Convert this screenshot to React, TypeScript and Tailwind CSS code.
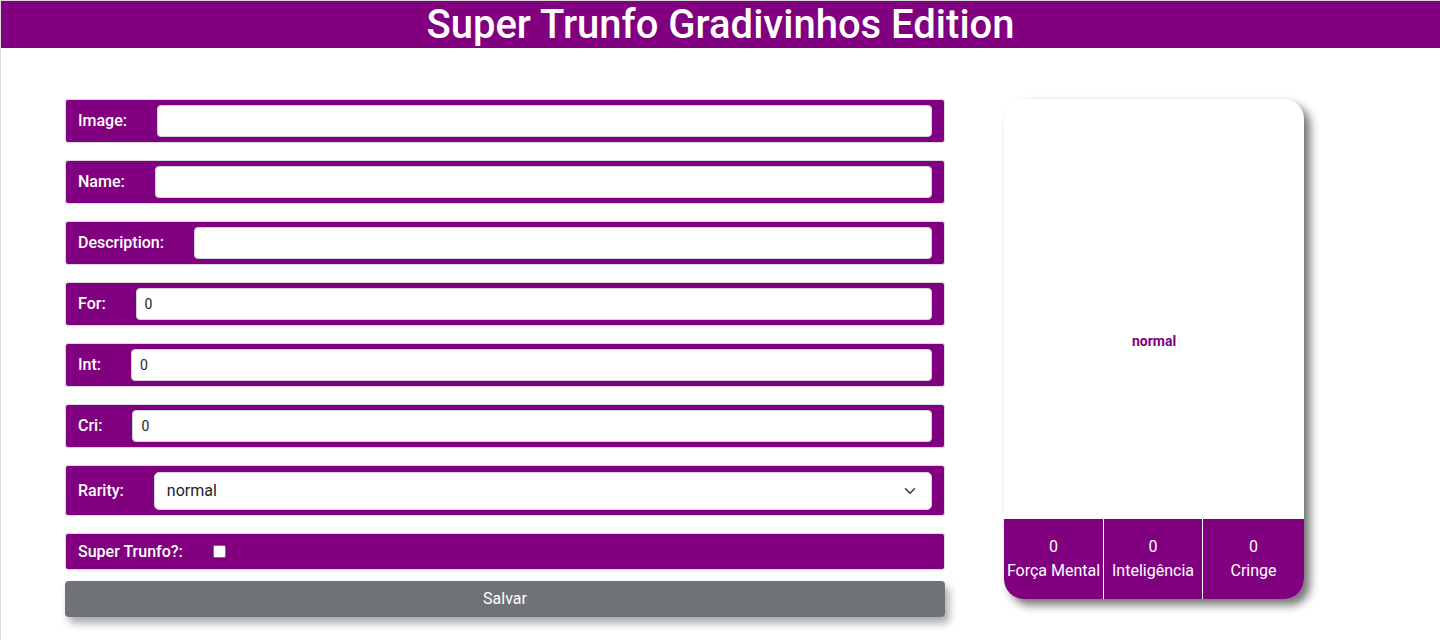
import React from "react";

function Row({ label, value, gap = "ml-[30px]" }: { label: string; value?: string; gap?: string }) {
  return (
    <div className="flex items-center h-[44px] bg-[#800080] border border-[#d8d8e0] rounded-[3px] pl-[12px] pr-[12px]">
      <span className="text-white text-[16px] font-medium whitespace-nowrap">{label}</span>
      <div className={`${gap} flex-1 h-[32px] bg-white rounded-[4px] border border-[#ced4da] flex items-center px-[8px] text-[14px] text-[#212529]`}>
        {value}
      </div>
    </div>
  );
}

export default function App() {
  return (
    <div className="w-[1440px] h-[640px] bg-white border-t border-l border-[#d9d9d9] overflow-hidden" style={{ fontFamily: "Roboto, 'Liberation Sans', sans-serif" }}>
      <div className="h-[47px] bg-[#800080] flex items-center justify-center">
        <h1 className="text-white text-[40px] leading-none font-medium">Super Trunfo Gradivinhos Edition</h1>
      </div>
      <div className="flex pl-[64px] pt-[51px]">
        <div className="w-[880px] flex flex-col">
          <div className="flex flex-col gap-[17px]">
            <Row label="Image:" />
            <Row label="Name:" />
            <Row label="Description:" />
            <Row label="For:" value="0" />
            <Row label="Int:" value="0" />
            <Row label="Cri:" value="0" />
            <div className="flex items-center h-[51px] bg-[#800080] border border-[#d8d8e0] rounded-[3px] pl-[12px] pr-[12px]">
              <span className="text-white text-[16px] font-medium">Rarity:</span>
              <div className="ml-[30px] flex-1 h-[38px] bg-white rounded-[5px] border border-[#ced4da] flex items-center justify-between pl-[12px] pr-[15px] text-[16px] text-[#212529]">
                <span>normal</span>
                <svg width="12" height="12" viewBox="0 0 16 16" fill="none" stroke="#343a40" strokeWidth="2" strokeLinecap="round" strokeLinejoin="round">
                  <path d="M2 5l6 6 6-6" />
                </svg>
              </div>
            </div>
            <div className="flex items-center h-[37px] bg-[#800080] border border-[#d8d8e0] rounded-[3px] pl-[12px]">
              <span className="text-white text-[16px] font-medium">Super Trunfo?:</span>
              <span className="ml-[30px] w-[13px] h-[13px] bg-white border border-[#767676] rounded-[2px]" />
            </div>
          </div>
          <button className="mt-[11px] h-[36px] bg-[#6f7377] rounded-[4px] text-white text-[16px] shadow-[4px_6px_8px_rgba(0,0,0,0.35)]">
            Salvar
          </button>
        </div>
        <div className="ml-[59px] w-[300px] h-[500px] rounded-[20px] bg-white flex flex-col overflow-hidden shadow-[6px_6px_10px_rgba(0,0,0,0.55)]">
          <div className="flex-1 flex items-center justify-center pt-[65px] text-[#800080] text-[14px] font-bold">normal</div>
          <div className="h-[80px] bg-[#800080] flex text-white text-[16px]">
            <div className="w-[100px] flex flex-col items-center justify-center leading-[24px] border-r border-white">
              <span>0</span>
              <span>Força Mental</span>
            </div>
            <div className="w-[99px] flex flex-col items-center justify-center leading-[24px] border-r border-white">
              <span>0</span>
              <span>Inteligência</span>
            </div>
            <div className="flex-1 flex flex-col items-center justify-center leading-[24px]">
              <span>0</span>
              <span>Cringe</span>
            </div>
          </div>
        </div>
      </div>
    </div>
  );
}
